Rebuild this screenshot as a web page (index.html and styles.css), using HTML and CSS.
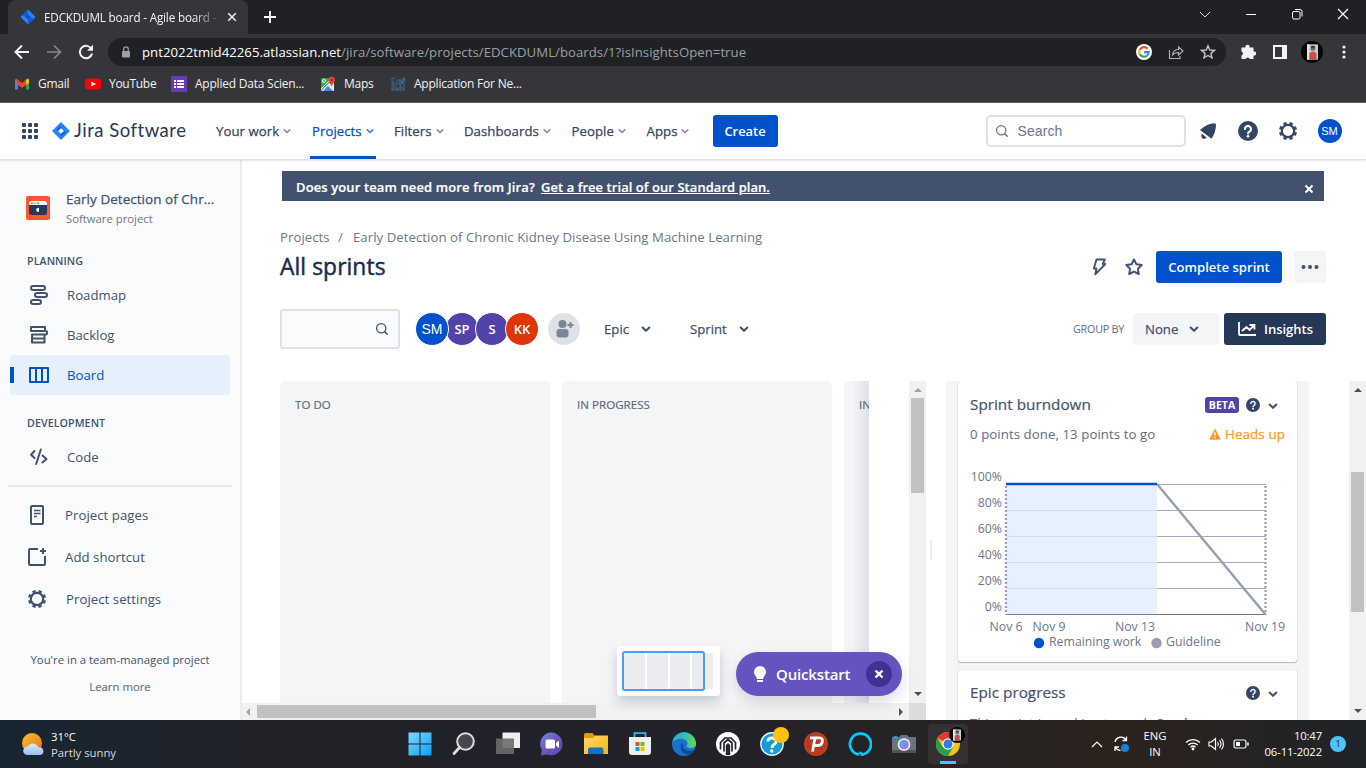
FILE: index.html
```html
<!DOCTYPE html>
<html lang="en">
<head>
<meta charset="utf-8">
<title>EDCKDUML board - Agile board - Jira</title>
<link rel="stylesheet" href="styles.css">
</head>
<body>
<svg class="defs" width="0" height="0" aria-hidden="true">
  <defs>
    <linearGradient id="win" gradientUnits="userSpaceOnUse" x1="0" y1="0" x2="24" y2="24"><stop offset="0" stop-color="#7fdcff"/><stop offset="1" stop-color="#0a9bf5"/></linearGradient>
    <linearGradient id="sun" x1="0" y1="0" x2="1" y2="1"><stop offset="0" stop-color="#f5c02e"/><stop offset="1" stop-color="#f0700e"/></linearGradient>
    <linearGradient id="cloud" x1="0" y1="0" x2="0" y2="1"><stop offset="0" stop-color="#dbe9ff"/><stop offset="1" stop-color="#9dbcf0"/></linearGradient>
    <linearGradient id="chat" x1="0" y1="0" x2="1" y2="1"><stop offset="0" stop-color="#6a8be0"/><stop offset=".6" stop-color="#6c50b8"/><stop offset="1" stop-color="#5a4ab0"/></linearGradient>
    <linearGradient id="folder" x1="0" y1="0" x2="1" y2="1"><stop offset="0" stop-color="#ffd869"/><stop offset="1" stop-color="#f8b90f"/></linearGradient>
    <linearGradient id="edge1" x1="0" y1="0" x2="1" y2="0"><stop offset="0" stop-color="#2aa9e0"/><stop offset=".6" stop-color="#35c1b0"/><stop offset="1" stop-color="#6bd84a"/></linearGradient>
    <linearGradient id="lens" x1="0" y1="0" x2="1" y2="1"><stop offset="0" stop-color="#39c0f0"/><stop offset="1" stop-color="#c45ae0"/></linearGradient>
    <symbol id="chev" viewBox="0 0 10 10"><path d="M2.200 3.800L5 6.500l2.800-2.700" fill="none" stroke="currentColor" stroke-width="1.700" stroke-linecap="round" stroke-linejoin="round"/></symbol>
    <symbol id="help" viewBox="0 0 20 20"><circle cx="10" cy="10" r="10" fill="currentColor"/><path d="M7 8a3 3 0 1 1 4.600 2.500c-1 .6-1.500 1-1.500 2" fill="none" stroke="#fff" stroke-width="2.100" stroke-linecap="round"/><circle cx="10" cy="15.300" r="1.350" fill="#fff"/></symbol>
    <symbol id="gear" viewBox="0 0 20 20"><circle cx="10" cy="10" r="6.200" fill="none" stroke="currentColor" stroke-width="2.200"/><circle cx="10" cy="10" r="7.700" fill="none" stroke="currentColor" stroke-width="2.800" stroke-dasharray="3.200 2.848" stroke-dashoffset="-1.300"/></symbol>
    <symbol id="search" viewBox="0 0 14 14"><circle cx="6.200" cy="6.200" r="4.600" fill="none" stroke="currentColor" stroke-width="1.300"/><path d="M9.600 9.600l2.600 2.600" stroke="currentColor" stroke-width="1.500" stroke-linecap="round"/></symbol>
    <symbol id="jira" viewBox="0 0 18 18"><path d="M9 0l9 9-9 9-9-9z" fill="#2684ff"/><path d="M9 3.500v2.700L6.200 9 4.500 7.500zM9 14.500v-2.700L11.800 9l1.700 1.500z" fill="#0f5fd6"/><path d="M9 6.200l2.800 2.800L9 11.800 6.200 9z" fill="#fff"/></symbol>
    <symbol id="person" viewBox="0 0 14 20"><rect width="14" height="20" fill="#9fd8d2"/><path d="M0 0h3v20H0z" fill="#e8e4d8"/><circle cx="7.500" cy="5.500" r="3" fill="#8b5a48"/><path d="M4.500 5a3 3 0 0 1 6 0l-.5-.8H5z" fill="#2a1b1b"/><path d="M3 20V12q4.500-5 9 0v8z" fill="#cf4a50"/></symbol>
  </defs>
</svg>

<header class="chrome">
  <div class="tabstrip">
    <div class="tab">
      <svg class="tab-logo" viewBox="0 0 18 18"><path d="M9 .500l8.500 8.500L9 17.500.5 9z" fill="#2684ff"/><path d="M9 .500v5.500L6 9 2.700 6.800zM9 17.500v-5.500l3-3 3.300 2.500z" fill="#0b5bd3"/><path d="M9 6l3 3-3 3-3-3z" fill="#1550a8"/></svg>
      <span class="tab-title">EDCKDUML board - Agile board -</span>
      <svg class="tab-close" viewBox="0 0 10 10"><path d="M1.200 1.200l7.600 7.600M8.800 1.200L1.200 8.800" stroke="#e8eaed" stroke-width="1.600"/></svg>
    </div>
    <svg class="new-tab" viewBox="0 0 12 12"><path d="M6 0v12M0 6h12" stroke="#fff" stroke-width="1.800"/></svg>
    <div class="window-buttons">
      <svg viewBox="0 0 12 12"><path d="M1 4l5 5 5-5" fill="none" stroke="#ddd" stroke-width="1"/></svg>
      <svg viewBox="0 0 12 12"><path d="M1 6.500h10" stroke="#fff"/></svg>
      <svg viewBox="0 0 12 12"><rect x="1.500" y="3.500" width="7.500" height="7.500" rx="1.500" fill="none" stroke="#fff"/><path d="M4 1.500h5q2 0 2 2v5" fill="none" stroke="#fff"/></svg>
      <svg viewBox="0 0 12 12"><path d="M1 1l10 10M11 1L1 11" stroke="#fff" stroke-width="1.200"/></svg>
    </div>
  </div>
  <div class="toolbar">
    <svg class="nav-ico" viewBox="0 0 16 16"><path d="M15 8H2M8 1.500L1.500 8 8 14.500" fill="none" stroke="#f1f3f4" stroke-width="1.900"/></svg>
    <svg class="nav-ico" viewBox="0 0 16 16"><path d="M1 8h13M8 1.500L14.500 8 8 14.500" fill="none" stroke="#85868a" stroke-width="1.700"/></svg>
    <svg class="nav-ico" viewBox="0 0 16 16"><path d="M13.500 5A6.200 6.200 0 1 0 14.100 9.500" fill="none" stroke="#f1f3f4" stroke-width="2"/><path d="M15 .8v6H9z" fill="#f1f3f4"/></svg>
    <div class="address">
      <svg class="lock" viewBox="0 0 10 12"><rect x="1" y="5" width="8" height="6.500" rx=".8" fill="#9aa0a6"/><path d="M2.700 5V3.200a2.300 2.300 0 0 1 4.600 0V5" fill="none" stroke="#9aa0a6" stroke-width="1.300"/></svg>
      <span class="url"><b>pnt2022tmid42265.atlassian.net</b>/jira/software/projects/EDCKDUML/boards/1?isInsightsOpen=true</span>
      <svg class="g16" viewBox="0 0 16 16"><circle cx="8" cy="8" r="8" fill="#fff"/><g fill="none" stroke-width="2.200"><path d="M11.500 4.700A4.800 4.800 0 0 0 3.800 5.800" stroke="#ea4335"/><path d="M3.800 5.800a4.800 4.800 0 0 0 0 4.500" stroke="#fbbc05"/><path d="M3.800 10.300a4.800 4.800 0 0 0 7.300 1.300" stroke="#34a853"/><path d="M11.100 11.600A4.800 4.800 0 0 0 12.700 8.100H8" stroke="#4285f4"/></g></svg>
      <svg class="share" viewBox="0 0 16 16"><path d="M1.500 6v8.500H12V12M4.500 11c.5-4 3-5.500 6-5.500V3l4.500 4-4.500 4V8.500C8 8.500 6 9 4.500 11z" fill="none" stroke="#b4b6b9" stroke-width="1.100"/></svg>
      <svg class="g16" viewBox="0 0 16 16"><path d="M8 1.800l1.800 4.200 4.600.4-3.500 3 1.100 4.500L8 11.500l-4 2.400 1.100-4.500-3.500-3 4.600-.4z" fill="none" stroke="#c4c7c9" stroke-width="1.400"/></svg>
    </div>
    <svg class="g16 puzzle" viewBox="0 0 16 16"><path d="M1.500 3.500h4a2.100 2.100 0 1 1 4 0h4v4a2.100 2.100 0 1 1 0 4V15H9.800a2.200 2.200 0 0 0-4.200 0H1.500v-3.500a2.100 2.100 0 0 0 0-4z" fill="#f1f3f4"/></svg>
    <svg class="panel-ico" viewBox="0 0 14 14"><rect width="14" height="14" fill="#f1f3f4"/><rect x="2" y="2" width="7" height="10" fill="#35363a"/></svg>
    <div class="profile"><svg viewBox="0 0 14 20"><use href="#person"/></svg></div>
    <svg class="dots" viewBox="0 0 4 14"><g fill="#f1f3f4"><circle cx="2" cy="2" r="1.600"/><circle cx="2" cy="7" r="1.600"/><circle cx="2" cy="12" r="1.600"/></g></svg>
  </div>
  <div class="bookmarks">
    <div class="bm bm1"><svg viewBox="0 0 16 16"><path d="M1 3.500l1.500-1L8 7l5.500-4.500 1.500 1V7L8 12 1 7z" fill="#ea4335"/><path d="M1 4v9.500h3V7z" fill="#4285f4"/><path d="M15 4v9.500h-3V7z" fill="#34a853"/><path d="M12 4l1.500-1.500L15 3.500V7l-3 2z" fill="#fbbc04"/><path d="M4.200 9.500v6h7.600v-6L8 12.300z" fill="#35363a"/></svg><span>Gmail</span></div>
    <div class="bm bm2"><svg viewBox="0 0 16 16"><rect y="2.500" width="16" height="11" rx="2.500" fill="#f00"/><path d="M6.300 5.500v5L11 8z" fill="#fff"/></svg><span>YouTube</span></div>
    <div class="bm bm3"><svg viewBox="0 0 16 16"><rect width="16" height="16" fill="#673ab7"/><g fill="#fff"><path d="M3 4h2v2H3zM3 7h2v2H3zM3 10h2v2H3zM6 4h7v2H6zM6 7h7v2H6zM6 10h7v2H6z"/></g></svg><span>Applied Data Scien...</span></div>
    <div class="bm bm4"><svg viewBox="0 0 16 16"><rect x="1" y="2" width="13" height="13" rx="1" fill="#34a853"/><path d="M1 15L13 3l1 1v11z" fill="#e8e6e0"/><path d="M3 15l5-5 5 5z" fill="#4285f4"/><path d="M1 13L11 3" stroke="#fff" stroke-width="1"/><circle cx="4" cy="5" r="1.500" fill="none" stroke="#fff"/><path d="M11.500 10.500C11 8 8.500 7 8.500 4a3.200 3.200 0 0 1 6.400 0c0 3-2.900 4-3.400 6.500z" fill="#ea4335"/><circle cx="11.700" cy="4" r="1.100" fill="#8c1d18"/></svg><span>Maps</span></div>
    <div class="bm bm5"><svg viewBox="0 0 16 16"><path d="M5 2Q1 2 2 4.500T4 7 1 7.500M6 7l2-4M9 7l1-4 1 4 3-6-2 7M15 2l-1 5M2 9v5q2 1 2-2T2 9M6 9v5q2 0 2-2.500M10 15v-6l3 5M14 8v7M3 8h11M5 14h7" fill="none" stroke="#3f6481" stroke-width="1.200"/></svg><span>Application For Ne...</span></div>
  </div>
</header>

<nav class="jira-nav">
  <svg class="switcher" viewBox="0 0 16 16"><g fill="#344563"><rect width="4" height="4" rx="1"/><rect x="6" width="4" height="4" rx="1"/><rect x="12" width="4" height="4" rx="1"/><rect y="6" width="4" height="4" rx="1"/><rect x="6" y="6" width="4" height="4" rx="1"/><rect x="12" y="6" width="4" height="4" rx="1"/><rect y="12" width="4" height="4" rx="1"/><rect x="6" y="12" width="4" height="4" rx="1"/><rect x="12" y="12" width="4" height="4" rx="1"/></g></svg>
  <svg class="jira-logo" viewBox="0 0 18 18"><use href="#jira"/></svg>
  <span class="product">Jira Software</span>
  <div class="menu">
    <a class="m1">Your work<svg><use href="#chev"/></svg></a>
    <a class="m2 current">Projects<svg><use href="#chev"/></svg></a>
    <a class="m3">Filters<svg><use href="#chev"/></svg></a>
    <a class="m4">Dashboards<svg><use href="#chev"/></svg></a>
    <a class="m5">People<svg><use href="#chev"/></svg></a>
    <a class="m6">Apps<svg><use href="#chev"/></svg></a>
  </div>
  <button class="btn primary create">Create</button>
  <div class="search"><svg viewBox="0 0 14 14"><use href="#search"/></svg><span>Search</span></div>
  <div class="nav-actions">
    <svg viewBox="0 0 20 20"><path d="M2 9Q9 2.500 16.500 2.200q1.500 0 1.500 1.500Q18 11 13.500 17.800z" fill="#344563"/><path d="M3.800 12.500l5 4.300q-3 2-4.600.4-1.700-1.700-.4-4.700z" fill="#344563"/></svg>
    <svg viewBox="0 0 20 20" color="#344563"><use href="#help"/></svg>
    <svg viewBox="0 0 20 20" color="#344563"><use href="#gear"/></svg>
  </div>
  <span class="me">SM</span>
</nav>

<div class="workspace">
  <aside class="sidebar">
    <div class="project">
      <svg viewBox="0 0 24 24"><rect width="24" height="24" rx="2" fill="#ff5630"/><rect x="3" y="5" width="18" height="14" rx="2.500" fill="#253858"/><path d="M3 9V7.200Q3 5 5.500 5h13Q21 5 21 7.200V9z" fill="#fff"/><circle cx="6" cy="7.200" r="1" fill="#ff5630"/><circle cx="9" cy="7.200" r="1" fill="#ffab00"/><circle cx="12" cy="7.200" r="1" fill="#00b8d9"/><path d="M10 13l3-1.500v4l-2 .5z" fill="#fff"/></svg>
      <div><strong>Early Detection of Chr...</strong><small>Software project</small></div>
    </div>
    <h3 class="plan">PLANNING</h3>
    <a class="item"><svg viewBox="0 0 20 20"><g fill="none" stroke="#42526e" stroke-width="2"><rect x="2" y="1" width="14" height="4" rx="2"/><rect x="6" y="8" width="12" height="4" rx="2"/><rect x="2" y="15" width="10" height="4" rx="2"/></g></svg><span>Roadmap</span></a>
    <a class="item"><svg viewBox="0 0 20 20"><g fill="none" stroke="#42526e" stroke-width="2" stroke-linejoin="round"><path d="M2 2h14v4H2zM2 6h15q1 0 1 1v1q0 1.500-1.500 1.500H3v8h12.500V10M3 13.500h12.500"/></g></svg><span>Backlog</span></a>
    <a class="item active"><svg viewBox="0 0 20 20"><g fill="none" stroke="#0052cc" stroke-width="2" stroke-linejoin="round"><rect x="1" y="3" width="18" height="14"/><path d="M7 3v14M13 3v14"/></g></svg><span>Board</span></a>
    <h3 class="dev">DEVELOPMENT</h3>
    <a class="item"><svg viewBox="0 0 20 20"><path d="M5.500 4L2 7.800 5.500 11M13.500 8.500L17.500 12 13.500 15.500M11.800 2.500L7.200 17" fill="none" stroke="#42526e" stroke-width="2" stroke-linecap="round" stroke-linejoin="round"/></svg><span>Code</span></a>
    <hr>
    <a class="item low"><svg viewBox="0 0 20 20"><rect x="4" y="1" width="12" height="18" rx="1" fill="none" stroke="#42526e" stroke-width="2"/><path d="M7 5.500h6.500M7 8.500h6.500M7 11.500h3" stroke="#42526e" stroke-width="1.600"/></svg><span>Project pages</span></a>
    <a class="item low"><svg viewBox="0 0 20 20"><path d="M11 2H3q-1 0-1 1v14q0 1 1 1h14q1 0 1-1V9" fill="none" stroke="#42526e" stroke-width="2"/><path d="M16 1v6M13 4h6" stroke="#42526e" stroke-width="2"/></svg><span>Add shortcut</span></a>
    <a class="item low set"><svg viewBox="0 0 20 20" color="#42526e"><use href="#gear"/></svg><span>Project settings</span></a>
    <p class="team">You're in a team-managed project</p>
    <p class="learn">Learn more</p>
  </aside>

  <main class="main">
    <div class="banner">
      <span>Does your team need more from Jira?</span><u>Get a free trial of our Standard plan.</u>
      <svg viewBox="0 0 10 10"><path d="M1.500 1.500l7 7M8.500 1.500l-7 7" stroke="#fff" stroke-width="2"/></svg>
    </div>
    <div class="crumbs"><span>Projects</span><span>/</span><span>Early Detection of Chronic Kidney Disease Using Machine Learning</span></div>
    <div class="title-row">
      <h1>All sprints</h1>
      <svg class="bolt" viewBox="0 0 20 20"><path d="M7.500 2.500h8.300L13.800 7H16.300L6.300 17.300 7.500 11.500H4.800z" fill="none" stroke="#42526e" stroke-width="1.900" stroke-linejoin="round"/></svg>
      <svg class="star" viewBox="0 0 20 20"><path d="M10 2.500l2.400 4.800 5.300.8-3.800 3.700.9 5.200-4.800-2.400L5.200 17l.9-5.200L2.300 8.100l5.300-.8z" fill="none" stroke="#42526e" stroke-width="2" stroke-linejoin="round"/></svg>
      <button class="btn primary complete">Complete sprint</button>
      <button class="btn more"><svg viewBox="0 0 20 6"><g fill="#42526e"><circle cx="3.500" cy="3" r="2"/><circle cx="10" cy="3" r="2"/><circle cx="16.500" cy="3" r="2"/></g></svg></button>
    </div>
    <div class="filters">
      <div class="box"><svg viewBox="0 0 14 14"><use href="#search"/></svg></div>
      <div class="people">
        <span class="av blue">SM</span><span class="av purple">SP</span><span class="av purple">S</span><span class="av red">KK</span>
      </div>
      <span class="add"><svg viewBox="0 0 20 20"><circle cx="8.500" cy="5" r="4" fill="#7a869a"/><path d="M2.500 13q0-3 3-3h6q3 0 3 3v2.500q0 3-3 3h-6q-3 0-3-3z" fill="#7a869a"/><path d="M16.500 3v6M13.500 6h6" stroke="#7a869a" stroke-width="2"/></svg></span>
      <span class="drop epic">Epic<svg><use href="#chev"/></svg></span>
      <span class="drop sprint">Sprint<svg><use href="#chev"/></svg></span>
      <span class="group">GROUP BY</span>
      <button class="btn none">None<svg><use href="#chev"/></svg></button>
      <button class="btn insights"><svg viewBox="0 0 20 16"><path d="M2 1v12q0 1 1 1h16" fill="none" stroke="#fff" stroke-width="1.800"/><path d="M5 10l4.500-4 3 3L17 4.500M12.500 4h5v4.500" fill="none" stroke="#fff" stroke-width="1.800"/></svg>Insights</button>
    </div>
    <div class="panes">
      <section class="board">
        <div class="columns">
          <div class="col">TO DO</div>
          <div class="col">IN PROGRESS</div>
          <div class="col cut">IN</div>
        </div>
        <div class="vbar"><i class="up off"></i><b></b><i class="down"></i></div>
        <div class="hbar"><i class="left off"></i><b></b><i class="right"></i></div>
        <div class="corner"></div>
        <div class="minimap"><div class="mini-cols"><i></i><i></i><i></i><i></i></div><div class="view"></div></div>
        <div class="quick">
          <svg class="bulb" viewBox="0 0 14 18"><path d="M7 1a6 6 0 0 1 6 6c0 3-2.500 4-3 7H4c-.5-3-3-4-3-7a6 6 0 0 1 6-6z" fill="#fff"/><path d="M4 16h6" stroke="#fff" stroke-width="2"/></svg>
          <span>Quickstart</span>
          <em><svg viewBox="0 0 10 10"><path d="M1.500 1.500l7 7M8.500 1.500l-7 7" stroke="#fff" stroke-width="2.400"/></svg></em>
        </div>
      </section>
      <div class="handle"></div>
      <section class="insight-panel">
        <article class="card">
          <header><h2>Sprint burndown</h2><span class="beta">BETA</span><svg class="q" viewBox="0 0 20 20"><use href="#help"/></svg><svg class="c"><use href="#chev"/></svg></header>
          <div class="points"><span>0 points done, 13 points to go</span><svg viewBox="0 0 14 14"><path d="M7 1.500L13 13H1z" fill="#ff991f" stroke="#ff991f" stroke-linejoin="round"/><path d="M7 5v4" stroke="#fff" stroke-width="1.500"/><circle cx="7" cy="11" r=".9" fill="#fff"/></svg><strong>Heads up</strong></div>
          <svg class="chart" width="339" height="205" viewBox="0 0 339 205">
            <g stroke="#a5adba"><path d="M48 26.500h260M48 52.500h260M48 78.500h260M48 104.500h260M48 130.500h260"/></g>
            <rect x="48" y="27" width="151" height="130" fill="#deebff" fill-opacity=".75"/>
            <path d="M48 156.500h260" stroke="#6b778c" stroke-width="1.200"/>
            <path d="M48 28v129M307.500 28v129" stroke="#97a0af" stroke-width="2.200" stroke-dasharray="2 2"/>
            <path d="M199 26l108.500 130.500" stroke="#97a0af" stroke-width="2.400"/>
            <path d="M48 26h151" stroke="#0052cc" stroke-width="2.600"/>
            <g class="ticks" text-anchor="end"><text x="44" y="23">100%</text><text x="44" y="49">80%</text><text x="44" y="75">60%</text><text x="44" y="101">40%</text><text x="44" y="127">20%</text><text x="44" y="153">0%</text></g>
            <g class="ticks" text-anchor="middle"><text x="48" y="173">Nov 6</text><text x="91" y="173">Nov 9</text><text x="177" y="173">Nov 13</text><text x="307" y="173">Nov 19</text></g>
            <circle cx="81" cy="185" r="5.200" fill="#0052cc"/><text class="ticks" x="91" y="188">Remaining work</text>
            <circle cx="198.500" cy="185" r="5.200" fill="#97a0af"/><text class="ticks" x="208" y="188">Guideline</text>
          </svg>
        </article>
        <article class="card second">
          <header><h2>Epic progress</h2><svg class="q" viewBox="0 0 20 20"><use href="#help"/></svg><svg class="c"><use href="#chev"/></svg></header>
          <p>This sprint is working towards <b>2 epics</b></p>
        </article>
      </section>
      <div class="vbar page"><i class="up"></i><b></b><i class="down"></i></div>
    </div>
  </main>
</div>

<footer class="taskbar">
  <svg class="weather" viewBox="0 0 24 24"><circle cx="11" cy="11" r="10" fill="url(#sun)"/><path d="M6.500 23a4.300 4.300 0 0 1 0-8.600 6 6 0 0 1 10.800 1A3.900 3.900 0 0 1 19.500 23z" fill="url(#cloud)"/></svg>
  <div class="temp"><span>31°C</span><span>Partly sunny</span></div>
  <div class="apps">
    <span><svg viewBox="0 0 24 24"><path d="M.5.500h11v11H.5zM12.500.500h11v11h-11zM.5 12.500h11v11H.5zM12.500 12.500h11v11h-11z" fill="url(#win)"/></svg></span>
    <span><svg viewBox="0 0 24 24"><circle cx="13.500" cy="9.500" r="8.300" fill="#454650" stroke="#ddd" stroke-width="2"/><path d="M7.500 15.500l-5.500 6" stroke="#ddd" stroke-width="2.800" stroke-linecap="round"/></svg></span>
    <span><svg viewBox="0 0 24 24"><rect x="6.500" y=".5" width="17.500" height="15.500" rx=".5" fill="#efefef"/><rect y="6.500" width="18" height="15.500" rx=".5" fill="#6b6b6b" fill-opacity=".9"/></svg></span>
    <span><svg viewBox="0 0 24 24"><path d="M12 .5A11.400 11.400 0 1 1 7 22.500L.8 23.500 2 18A11.400 11.400 0 0 1 12 .5z" fill="url(#chat)"/><rect x="5.500" y="7.500" width="9.500" height="9" rx="1.500" fill="#fff"/><path d="M16 11l3-2.500v7.500l-3-2.500z" fill="#fff"/></svg></span>
    <span><svg viewBox="0 0 24 24"><path d="M0 2.500Q0 1 1.500 1h7l2 2.500V6H0z" fill="#dd9a0b"/><path d="M0 6l9 0 2-2.500h13V22H0z" fill="url(#folder)"/><path d="M4 22v-4q0-2.500 2.500-2.500h11Q19.500 15.500 19.500 18v4z" fill="#1173c0"/></svg></span>
    <span><svg viewBox="0 0 24 24"><path d="M6.500 6V1.200h11V6" fill="none" stroke="#36b5e8" stroke-width="1.800"/><path d="M1 5h22v15q0 3-3 3H4q-3 0-3-3z" fill="#f0f0f0"/><path d="M7.500 10h4v4h-4z" fill="#f25022"/><path d="M12.500 10h4v4h-4z" fill="#7fba00"/><path d="M7.500 15h4v4h-4z" fill="#00a4ef"/><path d="M12.500 15h4v4h-4z" fill="#ffb900"/></svg></span>
    <span><svg viewBox="0 0 24 24"><circle cx="12" cy="12" r="12" fill="#1673c8"/><path d="M.3 10A12 12 0 0 1 24 11q.3 5-5.500 5-4 0-4-2.500 2-1.500 0-4.500Q9 4 .3 10z" fill="url(#edge1)"/><path d="M9 12q-2 9 6 10.500Q19 23 22 18q-5 2-9-.5-3-2-2-6z" fill="#0c4a96"/></svg></span>
    <span><svg viewBox="0 0 24 24"><circle cx="12" cy="12" r="12" fill="#fff"/><path d="M4.500 17.500v-7L9 6h6l4.500 4.500v7M12 7.500l-4 3.500v8.500M12 7.500l4 3.500v8.500" fill="none" stroke="#25252c" stroke-width="1.700"/><path d="M9.800 23v-10L12 11l2.200 2v10z" fill="#25252c"/></svg></span>
    <span><svg viewBox="0 0 24 24"><circle cx="12" cy="12" r="11.200" fill="#169bd8" stroke="#e9f3f9" stroke-width="1.400"/><path d="M7.800 9.500Q8 6 12 6t4 3.500q0 2-2.500 3.500-1.500 1-1.500 3" fill="none" stroke="#fff" stroke-width="2.800"/><circle cx="11.800" cy="19" r="1.700" fill="#fff"/></svg><i class="badge"></i></span>
    <span><svg viewBox="0 0 24 24"><circle cx="12" cy="12" r="12" fill="#b93c20"/><path d="M8.500 19.500L11 6M6 5.800h9.500q3.500 0 2.800 4-.7 3.700-4.200 3.700H11" fill="none" stroke="#fff" stroke-width="2.800"/></svg></span>
    <span><svg viewBox="0 0 24 24"><path d="M11 22.500a10.500 10.500 0 1 1 3 0q0-1.200-2.500-2" fill="none" stroke="#00caff" stroke-width="2.800"/></svg></span>
    <span><svg viewBox="0 0 24 24"><path d="M0 5h7l2-2h6l2 2h7v16H0z" fill="#6b747c"/><path d="M0 18h24v3H0z" fill="#4d555b"/><path d="M1.500 4.200h4V6h-4z" fill="#17b0f0"/><circle cx="12" cy="12.500" r="6.300" fill="#f2f2f2"/><circle cx="12" cy="12.500" r="4.800" fill="url(#lens)"/></svg></span>
    <span class="running"><svg viewBox="0 0 24 24"><circle cx="12" cy="12" r="12" fill="#fbc116"/><path d="M12 12L1.600 6A12 12 0 0 1 22.400 6z" fill="#e33b2e"/><path d="M1.600 6A12 12 0 0 0 12 24l5.200-9L12 12 6.800 15z" fill="#2a9d49"/><circle cx="12" cy="12" r="5.700" fill="#fff"/><circle cx="12" cy="12" r="4.500" fill="#3478e5"/></svg><i class="user"><svg viewBox="0 0 14 20"><use href="#person"/></svg></i></span>
  </div>
  <div class="tray">
    <svg class="t-up" viewBox="0 0 12 12"><path d="M1 9l5-5 5 5" fill="none" stroke="#fff" stroke-width="1.200"/></svg>
    <svg class="t-sync" viewBox="0 0 18 18"><path d="M14 5A6 6 0 0 0 3 7M14.500 1.500V5.500H10.500M3 16v-4h4M3.500 12.500q2 3 5 3" fill="none" stroke="#fff" stroke-width="1.300"/><circle cx="13" cy="13" r="4" fill="#1683d8"/></svg>
    <div class="lang"><span>ENG</span><span>IN</span></div>
    <svg class="t-wifi" viewBox="0 0 16 14"><path d="M1 5.500a10 10 0 0 1 14 0M3.300 8a6.700 6.700 0 0 1 9.400 0M5.500 10.200a3.600 3.600 0 0 1 5 0" fill="none" stroke="#fff" stroke-width="1.200"/><circle cx="8" cy="12" r="1.400" fill="#fff"/></svg>
    <svg class="t-vol" viewBox="0 0 17 14"><path d="M1 5h2.500L7.500 1.500v11L3.500 9H1z" fill="none" stroke="#fff" stroke-width="1.200"/><path d="M9.500 5q1.500 2 0 4M11.500 3q3 4 0 8M13.500 1.500q4 5.500 0 11" fill="none" stroke="#fff" stroke-width="1.100"/></svg>
    <svg class="t-bat" viewBox="0 0 16 12"><rect x="1" y="2" width="12" height="8" rx="1.800" fill="none" stroke="#fff" stroke-width="1.200"/><rect x="3" y="4" width="4" height="4" fill="#fff"/><path d="M15 4.500v3" stroke="#fff" stroke-width="1.500"/></svg>
    <div class="clock"><span>10:47</span><span>06-11-2022</span></div>
    <span class="count">1</span>
  </div>
</footer>
</body>
</html>
```

FILE: styles.css
```css
* { box-sizing: border-box; }
html, body { margin: 0; width: 1366px; height: 768px; overflow: hidden; }
body {
  display: flex; flex-direction: column; background: #fff; color: #42526e;
  font-family: "Open Sans", "Noto Sans", sans-serif; font-size: 13.2px; line-height: 20px;
}
svg { display: block; flex: none; }
.defs { position: absolute; }
h1, h2, h3, p { margin: 0; }
button { font: inherit; border: 0; padding: 0; }
span, a, strong, small, h1, h2, h3, p, u { white-space: nowrap; }

/* browser window */
.chrome { height: 103px; flex: none; background: #35363a; border-bottom: 1px solid #5d5e62; color: #f1f3f4; font-size: 12px; }
.tabstrip { height: 34px; background: #202124; display: flex; align-items: center; padding-left: 8px; }
.tab { width: 240px; height: 34px; background: #35363a; border-radius: 8px 8px 0 0; display: flex; align-items: center; padding-left: 12px; }
.tab-logo { width: 16px; height: 16px; }
.tab-title { width: 176px; margin-left: 8px; overflow: hidden; font-size: 11.700px; letter-spacing: -.17px; -webkit-mask-image: linear-gradient(90deg, #000 150px, transparent 176px); mask-image: linear-gradient(90deg, #000 150px, transparent 176px); }
.tab-close { width: 10px; height: 10px; margin-left: 7px; }
.new-tab { width: 12px; height: 12px; margin-left: 16px; }
.window-buttons { margin-left: auto; padding-right: 17px; display: flex; gap: 34px; margin-top: -6px; }
.window-buttons svg { width: 12px; height: 12px; }
.toolbar { height: 36px; display: flex; align-items: center; padding-left: 14px; }
.nav-ico { width: 16px; height: 16px; margin-right: 16px; }
.address { width: 1118px; margin-left: -2px; height: 28px; border-radius: 14px; background: #202124; display: flex; align-items: center; padding-left: 13px; }
.lock { width: 10px; height: 12px; }
.url { width: 994px; margin-left: 11px; color: #9aa0a6; font-size: 13.200px; letter-spacing: .03px; }
.url b { font-weight: 400; color: #fff; }
.g16 { width: 16px; height: 16px; }
.share { width: 16px; height: 16px; margin: 0 16px 0 16px; }
.puzzle { margin-left: 14px; }
.panel-ico { width: 14px; height: 14px; margin-left: 17px; }
.profile { width: 22px; height: 22px; margin-left: 14px; border-radius: 50%; background: #000; display: flex; align-items: center; justify-content: center; overflow: hidden; }
.profile svg { width: 11px; height: 20px; }
.dots { width: 4px; height: 14px; margin-left: 19px; }
.bookmarks { height: 28px; display: flex; align-items: center; padding-left: 14px; font-size: 12px; letter-spacing: -.28px; }
.bm { display: flex; align-items: center; gap: 8px; }
.bm svg { width: 16px; height: 16px; }
.bm1 { width: 71px; } .bm2 { width: 86px; } .bm3 { width: 149px; } .bm4 { width: 70px; }
.bm3 span, .bm5 span { letter-spacing: -.22px; }

/* top navigation */
.jira-nav { height: 57px; flex: none; display: flex; align-items: center; padding-left: 22px; background: #fff; border-bottom: 1px solid #e0e2e6; box-shadow: 0 1px 2px #0000001a; position: relative; z-index: 2; }
.switcher { width: 16px; height: 16px; }
.jira-logo { width: 18px; height: 18px; margin-left: 14px; }
.product { width: 142px; margin: -2px 0 0 4px; font: 400 18.500px/20px Lato, sans-serif; letter-spacing: .52px; color: #253858; }
.menu { display: flex; height: 56px; font-weight: 500; font-size: 13.200px; letter-spacing: .05px; color: #344563; -webkit-text-stroke: .25px; }
.menu a { display: flex; align-items: center; }
.menu svg { width: 10px; height: 10px; margin-left: 3px; color: #8993a4; }
.m1 { width: 96px; } .m2 { width: 82px; } .m3 { width: 70px; } .m4 { width: 107.500px; } .m5 { width: 75px; } .m6 { width: 66px; }
.menu .current { margin-left: -2px; padding-left: 2px; width: 84px; color: #0052cc; background: linear-gradient(#0052cc, #0052cc) 0 100% / 66px 3px no-repeat; }
.menu .current svg { color: #4c7fd0; }
.btn { display: flex; align-items: center; justify-content: center; height: 32px; border-radius: 3px; font-weight: 500; color: #42526e; background: #f4f5f7; }
.btn.primary { background: #0052cc; color: #fff; font-weight: 600; }
.create { width: 65px; font-size: 12.900px; }
.search { width: 200px; height: 32px; margin-left: 208px; border: 2px solid #dfe1e6; border-radius: 5px; display: flex; align-items: center; padding-left: 7px; font: 14px "Liberation Sans", sans-serif; letter-spacing: .1px; color: #6b778c; }
.search svg { width: 14px; height: 14px; margin-right: 9px; }
.nav-actions { display: flex; gap: 20px; margin-left: 12px; }
.nav-actions svg { width: 20px; height: 20px; }
.me { width: 24px; height: 24px; margin-left: 20px; border-radius: 50%; background: #0052cc; color: #fff; font: 11px/24px "Liberation Sans", sans-serif; text-align: center; }

.workspace { height: 560px; flex: none; display: flex; }

/* project sidebar */
.sidebar { width: 242px; flex: none; background: #fafbfc; border-right: 2px solid #ebecf0; padding-top: 31px; }
.project { display: flex; align-items: center; padding-left: 26px; height: 36px; gap: 16px; }
.project svg { width: 24px; height: 24px; margin-top: -2px; }
.project div { display: flex; flex-direction: column; }
.project strong { font-weight: 500; font-size: 13.500px; letter-spacing: .03px; line-height: 19px; -webkit-text-stroke: .25px; }
.project small { font-size: 11.300px; line-height: 20px; color: #6b778c; }
.sidebar h3 { font-size: 10.700px; line-height: 16px; font-weight: 600; padding-left: 27px; letter-spacing: .07px; }
.plan { margin: 26px 0 6px; }
.dev { margin: 20px 0 6px; }
.item { height: 40px; margin: 0 10px 0 10px; display: flex; align-items: center; padding-left: 19px; gap: 18px; border-radius: 4px; }
.item svg { width: 20px; height: 20px; }
.active { background: linear-gradient(#0052cc, #0052cc) 0 50% / 4px 16px no-repeat #e6effc; color: #0052cc; }
.sidebar hr { height: 2px; border: 0; background: #e6e8ec; margin: 8px 8px 7px 8px; }
.low { height: 42px; padding-left: 17px; letter-spacing: .05px; }
.set { gap: 19px; }
.team, .learn { text-align: center; font-size: 11.350px; line-height: 16px; }
.team { margin-top: 32px; }
.learn { margin-top: 11px; color: #6b778c; font-weight: 500; -webkit-text-stroke: .2px; }

/* main area */
.main { flex: 1; min-width: 0; display: flex; flex-direction: column; padding-top: 11px; }
.banner { width: 1042px; height: 30px; margin-left: 40px; background: #42526e; color: #fff; font-weight: 600; font-size: 12.950px; letter-spacing: .08px; -webkit-text-stroke: .2px; display: flex; align-items: center; padding: 2px 0 0 14px; }
.banner span { width: 245px; letter-spacing: .15px; }
.banner svg { width: 10px; height: 10px; margin: 4px 10px 0 auto; }
.crumbs { display: flex; margin: 26px 0 0 38px; color: #6b778c; letter-spacing: .045px; }
.crumbs span:nth-child(1) { width: 58px; } .crumbs span:nth-child(2) { width: 15px; }
.title-row { display: flex; align-items: center; height: 32px; margin: 4px 0 0 38px; }
.title-row h1 { width: 809px; font-size: 22.800px; font-weight: 500; letter-spacing: .08px; color: #172b4d; line-height: 28px; padding-bottom: 1px; -webkit-text-stroke: .45px; }
.title-row > svg { width: 20px; height: 20px; }
.star { margin-left: 15px; }
.complete { width: 126px; margin-left: 12px; font-size: 13.100px; }
.more { width: 32px; margin-left: 12px; }
.more svg { width: 20px; height: 6px; }
.filters { display: flex; align-items: center; height: 40px; margin: 26px 0 0 38px; }
.box { width: 120px; height: 40px; border: 2px solid #dfe1e6; border-radius: 3px; background: #fafbfc; display: flex; align-items: center; padding-left: 93px; }
.box svg { width: 14px; height: 14px; }
.people { display: flex; width: 124px; margin-left: 15px; }
.av { width: 34px; height: 34px; margin-right: -4px; border: 1px solid #fff; border-radius: 50%; color: #fff; font-weight: 600; text-align: center; line-height: 32px; font-size: 13px; }
.blue { background: #0052cc; font-family: "Liberation Sans", sans-serif; font-weight: 400; font-size: 14px; z-index: 1; }
.purple { background: #5243aa; } .red { background: #de350b; }
.add { width: 32px; height: 32px; margin-left: 9px; background: #dfe1e6; border-radius: 50%; padding: 6px; }
.add svg { width: 20px; height: 20px; }
.drop { display: flex; align-items: center; font-weight: 500; font-size: 13.200px; -webkit-text-stroke: .25px; }
.drop svg, .none svg { width: 12px; height: 12px; }
.epic { width: 48px; justify-content: space-between; margin-left: 24px; }
.sprint { width: 60px; justify-content: space-between; margin-left: 38px; }
.group { width: 60px; margin-left: 323px; font-size: 10.800px; letter-spacing: -.25px; color: #5e6c84; }
.none { width: 86px; justify-content: flex-start; padding-left: 12px; gap: 10px; -webkit-text-stroke: .25px; }
.insights { width: 102px; margin-left: 5px; background: #253858; color: #fff; gap: 7px; font-size: 13px; font-weight: 600; }
.insights svg { width: 20px; height: 16px; }

/* board and insights panes */
.panes { height: 339px; margin-top: 32px; display: flex; }
.board { width: 684px; display: grid; grid-template-columns: 667px 17px; grid-template-rows: 322px 17px; position: relative; }
.columns { display: flex; gap: 12px; padding-left: 38px; }
.col { width: 270px; height: 322px; flex: none; background: #f4f5f7; border-radius: 5px 5px 0 0; padding: 14px 15px; color: #5e6c84; font-size: 11.500px; letter-spacing: .06px; font-weight: 500; -webkit-text-stroke: .2px; }
.cut { width: 25px; padding-right: 0; overflow: hidden; border-radius: 5px 0 0; background: linear-gradient(90deg, #f4f5f7 30%, #dfe1e8); }
.vbar { width: 17px; background: #f1f1f1; display: flex; flex-direction: column; align-items: center; }
.vbar b { width: 13px; height: 95px; background: #c1c1c1; }
.vbar i, .hbar i { width: 0; height: 0; border: 4px solid transparent; }
.vbar .up { border-bottom-color: #505050; margin: 3px 0 6px; }
.vbar .down { border-top-color: #505050; margin: auto 0 3px; }
.hbar { background: #f1f1f1; display: flex; align-items: center; }
.hbar b { width: 339px; height: 13px; background: #c1c1c1; }
.hbar .left { border-right-color: #505050; margin: 0 7px 0 0; }
.hbar .right { border-left-color: #505050; margin: 0 2px 0 auto; }
.vbar .off { border-bottom-color: #a3a3a3; } .hbar .off { border-right-color: #a3a3a3; }
.corner { background: #dcdcdc; }
.minimap { position: absolute; left: 375px; top: 265px; width: 103px; height: 50px; padding: 7px; background: #fff; border-radius: 3px; box-shadow: 0 6px 12px #091e4233; }
.mini-cols { display: flex; gap: 2px; }
.mini-cols i { width: 21px; height: 36px; background: #ebecf0; border-radius: 2px; }
.view { position: absolute; left: 5px; top: 5px; width: 83px; height: 40px; border: 2px solid #4c9aff; border-radius: 3px; }
.quick { position: absolute; left: 494px; top: 271px; width: 166px; height: 44px; border-radius: 22px; background: #6554c0; box-shadow: 0 6px 14px #091e4226; color: #fff; display: flex; align-items: center; padding-left: 17px; font-weight: 600; font-size: 15px; letter-spacing: -.15px; }
.quick span { width: 90px; margin-left: 9px; }
.bulb { width: 14px; height: 18px; }
.quick em { width: 26px; height: 26px; border-radius: 50%; background: #403294; padding: 8px; }
.quick em svg { width: 10px; height: 10px; }
.handle { width: 2px; height: 20px; margin: 159px 14px 0 4px; background: #ebecf0; }
.insight-panel { width: 363px; padding: 0 12px; background: #f4f5f7; overflow: hidden; }
.card { height: 281px; background: #fff; border-radius: 3px; box-shadow: 0 1px 1px #091e4240, 0 0 1px #091e424f; }
.card header { height: 46px; display: flex; align-items: center; padding: 1px 18px 0 12px; }
.card h2 { flex: 1; font-size: 15.300px; font-weight: 400; padding-bottom: 2px; -webkit-text-stroke: .2px #42526e; }
.beta { width: 34px; height: 16px; border-radius: 3px; background: #5243aa; color: #fff; font-size: 10.500px; font-weight: 700; line-height: 16px; text-align: center; margin-right: 7px; }
.q { width: 14px; height: 14px; color: #344563; margin-right: 7px; }
.c { width: 12px; height: 12px; margin-top: 2px; }
.points { height: 14px; display: flex; align-items: center; padding: 0 12px; color: #5e6c84; letter-spacing: .09px; }
.points span { flex: 1; }
.points svg { width: 12px; height: 12px; margin-right: 4px; }
.points strong { color: #ff991f; font-weight: 500; font-size: 13.400px; -webkit-text-stroke: .25px; }
.chart { margin-top: 17px; }
.ticks { font-size: 12.300px; fill: #6b778c; }
.second { margin-top: 8px; height: 80px; }
.second header { height: 45px; }
.second p { padding-left: 12px; margin-top: -2px; color: #5e6c84; }
.page { margin-left: 40px; }
.page b { height: 140px; margin-top: 74px; }

/* desktop taskbar */
.taskbar { height: 48px; flex: none; display: flex; align-items: center; color: #fff; font-size: 11.300px; background: linear-gradient(90deg, #172632, #232126 22%, #20212a 36%, #232229 55%, #292422 75%, #2c221d 82%, #1f2327); }
.weather { width: 24px; height: 24px; margin-left: 21px; }
.temp { width: 347px; margin-left: 6px; display: flex; flex-direction: column; line-height: 16px; padding-top: 1px; }
.temp span:last-child { color: #d8dbdd; }
.apps { display: flex; }
.apps > span { width: 44px; height: 40px; display: flex; align-items: center; justify-content: center; position: relative; }
.apps > span > svg { width: 24px; height: 24px; }
.badge { position: absolute; right: 5px; top: 3px; width: 16px; height: 16px; border-radius: 50%; background: #ffc20e; }
.apps > .running { width: 40px; margin-left: 2px; background: linear-gradient(#4cc2ff, #4cc2ff) 50% 100% / 16px 3px no-repeat #343133; border-radius: 4px; }
.user { position: absolute; right: 3px; top: 3px; width: 16px; height: 16px; border-radius: 50%; background: #000; overflow: hidden; padding: 1px 4px; }
.user svg { width: 8px; height: 14px; }
.tray { flex: 1; display: flex; align-items: center; padding-left: 123px; }
.t-up { width: 12px; height: 12px; }
.t-sync { width: 18px; height: 18px; margin-left: 9px; }
.lang { width: 30px; margin-left: 10px; display: flex; flex-direction: column; text-align: center; line-height: 16px; }
.t-wifi { width: 16px; height: 14px; margin-left: 15px; }
.t-vol { width: 17px; height: 14px; margin-left: 7px; }
.t-bat { width: 16px; height: 12px; margin-left: 8px; }
.clock { width: 73px; display: flex; flex-direction: column; text-align: right; line-height: 16px; letter-spacing: -.15px; }
.count { width: 16px; height: 16px; margin-left: 8px; border-radius: 50%; background: #4cc2ff; color: #1b1b1b; font-size: 9px; line-height: 16px; text-align: center; }
```
